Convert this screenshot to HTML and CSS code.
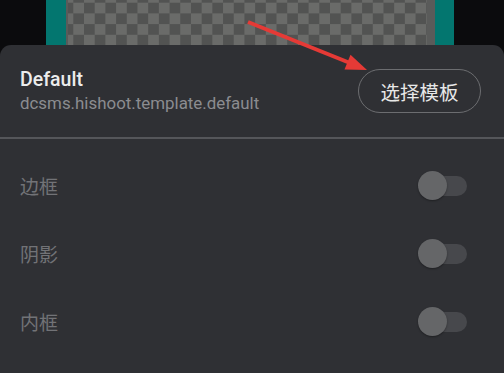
FILE: index.html
```html
<!DOCTYPE html>
<html lang="zh">
<head>
<meta charset="utf-8">
<title>Template</title>
<link rel="stylesheet" href="styles.css">
</head>
<body>
<div class="page">
  <div class="preview">
    <div class="teal teal-left"></div>
    <div class="strip strip-left"></div>
    <div class="checker"></div>
    <div class="strip strip-right"></div>
    <div class="teal teal-right"></div>
  </div>
  <div class="panel">
    <div class="header">
      <div class="info">
        <div class="title">Default</div>
        <div class="subtitle">dcsms.hishoot.template.default</div>
      </div>
      <button class="choose">选择模板</button>
    </div>
    <div class="rows">
      <div class="row"><span class="label">边框</span><span class="switch"><span class="track"></span><span class="thumb"></span></span></div>
      <div class="row"><span class="label">阴影</span><span class="switch"><span class="track"></span><span class="thumb"></span></span></div>
      <div class="row"><span class="label">内框</span><span class="switch"><span class="track"></span><span class="thumb"></span></span></div>
    </div>
  </div>
  <svg class="arrow" width="504" height="373" viewBox="0 0 504 373">
    <line x1="248" y1="22" x2="350" y2="63" stroke="#e53a36" stroke-width="4"/>
    <polygon points="367,70 344.5,69.5 350.5,54.7" fill="#e53a36"/>
  </svg>
</div>
</body>
</html>
```

FILE: styles.css
```css
html, body {
  margin: 0;
  padding: 0;
  background: #0b0b0d;
}
.page {
  position: relative;
  width: 504px;
  height: 373px;
  overflow: hidden;
  font-family: Roboto, "Noto Sans CJK SC", sans-serif;
}
.preview {
  display: flex;
  height: 45px;
  padding-left: 46px;
}
.teal {
  background: #03766f;
}
.teal-left { width: 20px; }
.teal-right { width: 19px; }
.strip { background: #5a5b5a; }
.strip-left { width: 2px; }
.strip-right { width: 8px; }
.checker {
  width: 359px;
  background: repeating-conic-gradient(#525352 0 25%, #6a6b69 0 50%);
  background-size: 21.4px 21.4px;
  background-position: -5.4px -8px;
}
.panel {
  background: #2f3034;
  border-radius: 11px 11px 0 0;
  height: 328px;
}
.header {
  box-sizing: border-box;
  height: 94px;
  display: flex;
  align-items: center;
  justify-content: space-between;
  padding: 0 23px 0 20px;
  border-bottom: 2px solid #55565a;
}
.info {
  display: flex;
  flex-direction: column;
}
.title {
  font-size: 19.5px;
  font-weight: 500;
  color: #ececec;
  line-height: 24px;
}
.subtitle {
  font-size: 16.9px;
  color: #8b8c90;
  line-height: 22px;
}
.choose {
  box-sizing: border-box;
  width: 123px;
  height: 44px;
  border: 1.5px solid #6c6d70;
  border-radius: 22px;
  background: transparent;
  color: #e8e8e8;
  font-family: "Noto Sans CJK SC", sans-serif;
  font-size: 19.5px;
  padding: 0;
  letter-spacing: 0;
}
.rows {
  padding-top: 12px;
}
.row {
  height: 68px;
  display: flex;
  align-items: center;
  justify-content: space-between;
  padding: 0 37px 0 20px;
}
.label {
  font-family: "Noto Sans CJK SC", sans-serif;
  font-size: 19px;
  color: #727377;
}
.switch {
  position: relative;
  width: 49px;
  height: 29px;
}
.track {
  position: absolute;
  left: 8px;
  right: 0;
  top: 5px;
  height: 20px;
  border-radius: 10px;
  background: #47484c;
}
.thumb {
  position: absolute;
  left: 0;
  top: 0;
  width: 29px;
  height: 29px;
  border-radius: 50%;
  background: #656668;
  box-shadow: 0 1px 2px rgba(0, 0, 0, 0.35);
}
.arrow {
  position: absolute;
  left: 0;
  top: 0;
  pointer-events: none;
}
```
